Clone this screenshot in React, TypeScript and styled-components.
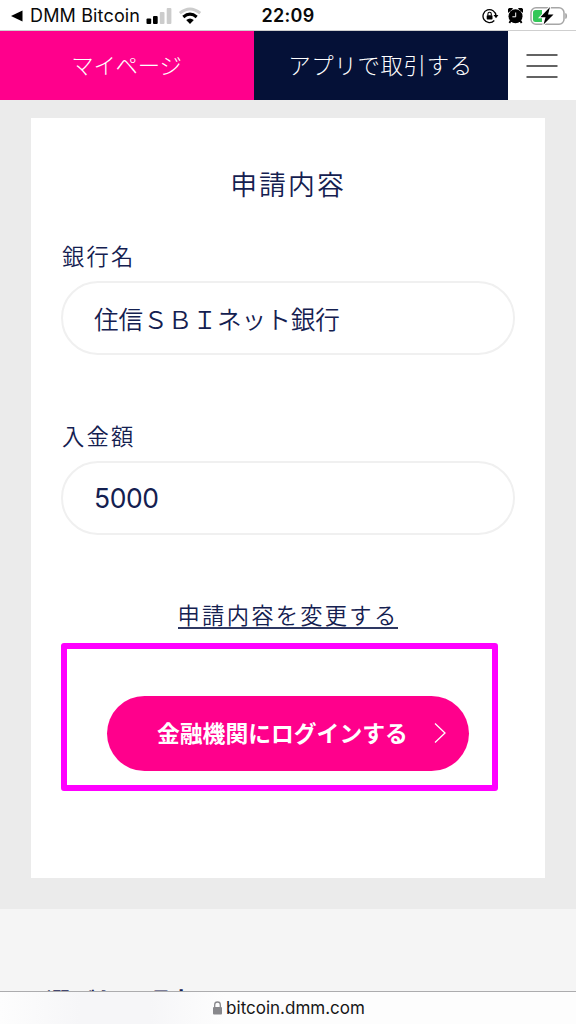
import React from "react";
import styled, { createGlobalStyle } from "styled-components";

const jp = `"Noto Sans CJK JP", sans-serif`;
const latin = `Inter, "Noto Sans CJK JP", sans-serif`;
const ink = "#142050";
const pink = "#ff008c";

const Global = createGlobalStyle`
  * { box-sizing: border-box; }
  body { margin: 0; background: #fff; font-family: ${jp}; color: ${ink}; }
  button, input { font: inherit; color: inherit; }
`;

const Screen = styled.div`
  width: 576px;
  height: 1024px;
  overflow: hidden;
  display: flex;
  flex-direction: column;
  background: #f5f5f5;
`;

const StatusBar = styled.div`
  flex: none;
  height: 31px;
  border-bottom: 1px solid #cfcfcf;
  background: #fff;
  color: #0a0a0a;
  font-family: ${latin};
  display: grid;
  grid-template-columns: 1fr auto 1fr;
  align-items: center;
`;

const StatusGroup = styled.div<{ $end?: boolean }>`
  display: flex;
  align-items: center;
  justify-content: ${(p) => (p.$end ? "flex-end" : "flex-start")};
  padding: ${(p) => (p.$end ? "0 8px 0 0" : "0 0 0 11px")};
`;

const BackApp = styled.span`
  font-size: 18px;
  line-height: 30px;
  letter-spacing: 0.15px;
  margin: 1px 6px 0 7px;
  white-space: nowrap;
`;

const Clock = styled.span`
  font-size: 18px;
  line-height: 30px;
  font-weight: 600;
  letter-spacing: 0.3px;
  padding-top: 1px;
`;

const Header = styled.header`
  flex: none;
  height: 69px;
  background: #fff;
  display: grid;
  grid-template-columns: 254px 254px 68px;
`;

const HeaderTab = styled.a<{ $bg: string; $spacing: number }>`
  display: flex;
  align-items: center;
  justify-content: center;
  background: ${(p) => p.$bg};
  color: #fff;
  font-size: 22.4px;
  font-weight: 300;
  letter-spacing: ${(p) => p.$spacing}px;
  padding: 0 1px 4px 0;
  white-space: nowrap;
`;

const MenuButton = styled.button`
  border: 0;
  padding: 0;
  background: none;
  display: flex;
  align-items: center;
  justify-content: center;
`;

const Main = styled.main`
  flex: none;
  height: 809px;
  background: #ebebeb;
  padding: 18px 31px 31px;
`;

const Card = styled.section`
  height: 760px;
  background: #fff;
  padding: 46px 31px 0;
  display: flex;
  flex-direction: column;
`;

const Title = styled.h1`
  margin: 0;
  font-size: 26.8px;
  line-height: 40px;
  font-weight: 350;
  letter-spacing: 2.1px;
  text-align: center;
`;

const Field = styled.label`
  display: block;
  height: 180px;
`;

const FieldLabel = styled.span`
  display: block;
  font-size: 22.3px;
  line-height: 32px;
  font-weight: 350;
  letter-spacing: 2.2px;
  margin-bottom: 10px;
`;

const FieldInput = styled.input<{ $digits?: boolean }>`
  display: block;
  width: 454px;
  height: 74px;
  margin-left: -1px;
  border: 2px solid #f0f0f0;
  border-radius: 37px;
  background: #fff;
  padding: 0 31px 1px;
  outline: none;
  font-family: ${(p) => (p.$digits ? latin : jp)};
  font-size: ${(p) => (p.$digits ? 26.5 : 24.6)}px;
  font-weight: ${(p) => (p.$digits ? 400 : 350)};
  letter-spacing: ${(p) => (p.$digits ? -0.4 : 0)}px;
`;

const Fields = styled.div`
  margin-top: 35px;
`;

const ChangeLink = styled.a`
  align-self: center;
  height: 29px;
  margin-top: 1px;
  border-bottom: 2px solid #2e3862;
  font-size: 22.3px;
  line-height: 28px;
  font-weight: 350;
  letter-spacing: 2.25px;
  white-space: nowrap;
`;

const Highlight = styled.div`
  width: 437px;
  height: 148px;
  margin: 14px 0 0 -1px;
  border: 6px solid #ff00ff;
  border-radius: 3px;
  padding: 46.5px 0 0 40px;
`;

const LoginButton = styled.button`
  width: 362px;
  height: 75px;
  border: 0;
  border-radius: 38px;
  background: ${pink};
  color: #fff;
  padding: 0 23px 0 50px;
  display: flex;
  align-items: center;
  justify-content: space-between;
  font-size: 22.8px;
  font-weight: 700;
  white-space: nowrap;
`;

const ButtonText = styled.span`
  padding-bottom: 2px;
`;

const NextSection = styled.section`
  flex: none;
  height: 82px;
  overflow: hidden;
  padding: 71px 0 0 46px;
  background: #f5f5f5;
`;

const SectionHeading = styled.h2`
  margin: 0;
  font-size: 24.6px;
  line-height: 40px;
  font-weight: 700;
`;

const AddressBar = styled.footer`
  flex: none;
  height: 33px;
  border-top: 1px solid #acacae;
  background: linear-gradient(90deg, #fdfdfd 0, #f6f6f8 80px, #f6f6f8 150px, #fdfdfd 225px);
  display: flex;
  align-items: center;
  justify-content: center;
  gap: 4px;
  font-family: ${latin};
  font-size: 17px;
  color: #161616;
  padding: 0 0 1px 2px;
`;

const Signal = () => (
  <svg width="27" height="16" viewBox="0 0 27 16">
    <rect x="0.5" y="10.5" width="4.7" height="5.5" rx="1" fill="#000" />
    <rect x="7" y="8" width="4.7" height="8" rx="1" fill="#000" />
    <rect x="13.8" y="4" width="4.7" height="12" rx="1" fill="#ccc" />
    <rect x="20.7" y="0" width="4.7" height="16" rx="1" fill="#ccc" />
  </svg>
);

const Wifi = () => (
  <svg width="24" height="18" viewBox="0 0 24 18" style={{ marginLeft: 5 }} fill="none">
    <path d="M1.8 6.2Q12 -2.2 22.2 6.2" stroke="#ccc" strokeWidth="3" />
    <path d="M5.3 10Q12 4.2 18.7 10" stroke="#000" strokeWidth="3" />
    <path d="M8.2 13.1Q12 9.9 15.8 13.1L12 17Z" fill="#000" />
  </svg>
);

const RotationLock = () => (
  <svg width="17" height="16" viewBox="0 0 17 16" fill="none">
    <path d="M12.3 12.5A6.5 6.5 0 1 1 14 7.6" stroke="#000" strokeWidth="1.3" />
    <path d="M11.5 7H16.4L14 10.2Z" fill="#000" />
    <rect x="4.7" y="7.2" width="5.8" height="4.2" rx=".7" fill="#000" />
    <path d="M5.9 7.5V6a1.7 1.7 0 0 1 3.4 0v1.5" stroke="#000" strokeWidth="1.1" />
  </svg>
);

const Alarm = () => (
  <svg width="15" height="16" viewBox="0 0 15 16" style={{ marginLeft: 9 }}>
    <circle cx="7.5" cy="8.3" r="7" fill="#000" />
    <path d="M.3 4.8A3 3 0 0 1 5 .8ZM14.7 4.8A3 3 0 0 0 10 .8Z" fill="#000" />
    <path d="M2.8 12.5 1.4 15M12.2 12.5l1.4 2.5" stroke="#000" strokeWidth="1.8" />
    <path d="M7.7 4.5V8.8H4.4" stroke="#fff" strokeWidth="1" fill="none" />
  </svg>
);

const Battery = () => (
  <svg width="38" height="20" viewBox="0 0 38 20" style={{ marginLeft: 7 }}>
    <rect x="1" y="1.7" width="33" height="16.6" rx="5" fill="#fff" stroke="#a6a6a6" strokeWidth="1.5" />
    <path d="M5.5 4H12v12H5.5a2.5 2.5 0 0 1-2.5-2.5v-7A2.5 2.5 0 0 1 5.5 4Z" fill="#34c759" />
    <path d="M35.8 7.5q1.8 2.5 0 5Z" fill="#a6a6a6" stroke="#a6a6a6" />
    <path d="M20 1 10.3 11.3H15.5L13.5 18.5 23.5 8.5H18Z" fill="#000" stroke="#fff" strokeWidth="2" paintOrder="stroke" />
  </svg>
);

export default function App() {
  return (
    <>
      <Global />
      <Screen>
        <StatusBar>
          <StatusGroup>
            <svg width="12" height="12" viewBox="0 0 12 12">
              <path d="M0 6 11.5.5v11Z" fill="#000" />
            </svg>
            <BackApp>DMM Bitcoin</BackApp>
            <Signal />
            <Wifi />
          </StatusGroup>
          <Clock>22:09</Clock>
          <StatusGroup $end>
            <RotationLock />
            <Alarm />
            <Battery />
          </StatusGroup>
        </StatusBar>
        <Header>
          <HeaderTab $bg={pink} $spacing={-0.2}>マイページ</HeaderTab>
          <HeaderTab $bg="#051137" $spacing={0.7}>アプリで取引する</HeaderTab>
          <MenuButton aria-label="メニュー">
            <svg width="32" height="26" viewBox="0 0 32 26">
              <path d="M0.5 2H31.5M0.5 13H31.5M0.5 24H31.5" stroke="#303030" strokeWidth="1.7" />
            </svg>
          </MenuButton>
        </Header>
        <Main>
          <Card>
            <Title>申請内容</Title>
            <Fields>
              <Field>
                <FieldLabel>銀行名</FieldLabel>
                <FieldInput readOnly value="住信ＳＢＩネット銀行" />
              </Field>
              <Field>
                <FieldLabel>入金額</FieldLabel>
                <FieldInput $digits readOnly value="5000" />
              </Field>
            </Fields>
            <ChangeLink>申請内容を変更する</ChangeLink>
            <Highlight>
              <LoginButton>
                <ButtonText>金融機関にログインする</ButtonText>
                <svg width="12" height="22" viewBox="0 0 12 22">
                  <path d="M1 1.5 11 11 1 20.5" fill="none" stroke="#fff" strokeWidth="1.3" />
                </svg>
              </LoginButton>
            </Highlight>
          </Card>
        </Main>
        <NextSection>
          <SectionHeading>選ばれる理由</SectionHeading>
        </NextSection>
        <AddressBar>
          <svg width="9" height="14" viewBox="0 0 9 14">
            <rect x="0" y="6" width="9" height="7.5" rx="1" fill="#88888c" />
            <path d="M1.7 6.5V3.8a2.8 2.8 0 0 1 5.6 0v2.7" fill="none" stroke="#88888c" strokeWidth="1.3" />
          </svg>
          bitcoin.dmm.com
        </AddressBar>
      </Screen>
    </>
  );
}
